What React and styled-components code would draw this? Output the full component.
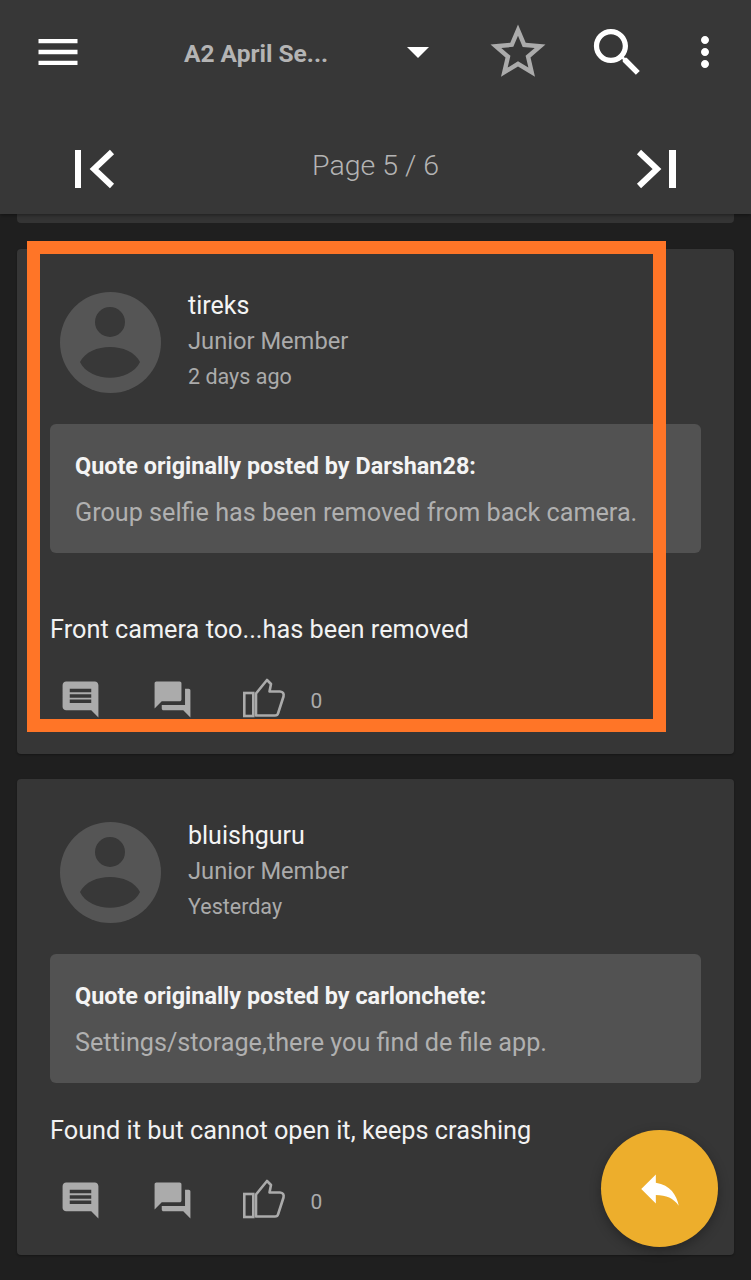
import styled, { createGlobalStyle } from "styled-components"

const GlobalStyle = createGlobalStyle`
    html, body {
        margin: 0;
        padding: 0;
        background: #1f1f1f;
        font-family: Roboto, "Liberation Sans", sans-serif;
    }
`

const Page = styled.div`
    position: relative;
    width: 751px;
    height: 1280px;
    overflow: hidden;
    background: #1f1f1f;
`

const Header = styled.header`
    position: relative;
    z-index: 2;
    height: 214px;
    background: #373737;
    box-shadow: 0 1px 4px rgba(0, 0, 0, 0.45);
`

const ToolRow = styled.div`
    display: flex;
    align-items: center;
    height: 104px;
    padding-left: 32px;
`

const Title = styled.span`
    width: 223px;
    margin-left: 100px;
    margin-top: 2px;
    font-size: 24.5px;
    font-weight: 700;
    color: #b4b4b4;
`

const Icon = styled.svg`
    display: block;
    flex: none;
    margin-left: ${(p) => p.$left || 0}px;
    margin-top: ${(p) => p.$top || 0}px;
    fill: ${(p) => p.$color || "#fff"};
`

const PagerRow = styled.div`
    display: flex;
    align-items: center;
    justify-content: space-between;
    box-sizing: border-box;
    height: 110px;
    padding: 20px 74px 0;
    font-size: 28.5px;
    font-weight: 300;
    color: #b4b4b4;
`

const PagerLabel = styled.span`
    margin-top: -8px;
`

const PrevTail = styled.div`
    height: 9px;
    margin: 0 17px 26px;
    background: #343434;
    border-radius: 0 0 4px 4px;
`

const Card = styled.article`
    margin: 0 17px 25px;
    padding: 39px 33px 33px;
    background: #363636;
    border-radius: 4px;
    box-shadow: 0 1px 2px rgba(0, 0, 0, 0.3);
`

const AuthorRow = styled.div`
    display: flex;
    align-items: flex-start;
    padding-left: 10px;
`

const Avatar = styled.svg`
    display: block;
    flex: none;
    margin-top: 4px;
`

const AuthorInfo = styled.div`
    display: flex;
    flex-direction: column;
    margin-left: 27px;
    font-size: 23.7px;
    line-height: 35px;
    color: #ababab;
`

const Name = styled.span`
    font-size: 25px;
    line-height: 36px;
    color: #f4f4f4;
`

const When = styled.span`
    font-size: 21.5px;
    line-height: 36px;
`

const Quote = styled.div`
    margin-top: 29px;
    padding: 24px 25px 22px;
    background: #525252;
    border-radius: 6px;
    font-size: 25.2px;
    line-height: 36px;
    color: #b0b0b0;
`

const QuoteHead = styled.div`
    margin-bottom: 11px;
    font-size: 23.4px;
    font-weight: 700;
    color: #f4f4f4;
`

const Body = styled.p`
    margin: ${(p) => p.$gap}px 0 0;
    font-size: 25.3px;
    line-height: 36px;
    color: #f2f2f2;
`

const Actions = styled.div`
    display: flex;
    align-items: center;
    height: 43px;
    margin-top: 30px;
    padding-left: 8.5px;
`

const Count = styled.span`
    margin-left: 25px;
    margin-top: 2px;
    font-size: 21px;
    color: #ababab;
`

const Highlight = styled.div`
    position: absolute;
    z-index: 1;
    left: 27px;
    top: 241px;
    width: 639px;
    height: 491px;
    box-sizing: border-box;
    border: 13px solid #ff7527;
`

const Fab = styled.button`
    position: absolute;
    z-index: 3;
    left: 601px;
    top: 1130px;
    display: flex;
    align-items: center;
    justify-content: center;
    width: 117px;
    height: 117px;
    padding: 0;
    border: none;
    border-radius: 50%;
    background: #edae2c;
    box-shadow: 0 4px 12px rgba(0, 0, 0, 0.3);
`

const MenuIcon = () => (
    <Icon width="52" height="52" viewBox="0 0 24 24">
        <path d="M3 18h18v-2H3v2zm0-5h18v-2H3v2zm0-7v2h18V6H3z" />
    </Icon>
)

const CaretIcon = () => (
    <Icon width="22" height="11" viewBox="0 0 22 11" $color="#fff">
        <path d="M0 0h22L11 11z" />
    </Icon>
)

const StarIcon = () => (
    <Icon width="66" height="66" viewBox="0 0 24 24" $left={56} $color="#ababab">
        <path d="M22 9.24l-7.19-.62L12 2 9.19 8.63 2 9.24l5.46 4.73L5.82 21 12 17.27 18.18 21l-1.63-7.03L22 9.24zM12 15.4l-3.76 2.27 1-4.28-3.32-2.88 4.38-.38L12 6.1l1.71 4.04 4.38.38-3.32 2.88 1 4.28L12 15.4z" />
    </Icon>
)

const SearchIcon = () => (
    <Icon width="63" height="63" viewBox="0 0 24 24" $left={35}>
        <path d="M15.5 14h-.79l-.28-.27C15.41 12.59 16 11.11 16 9.5 16 5.91 13.09 3 9.5 3S3 5.91 3 9.5 5.91 16 9.5 16c1.61 0 3.09-.59 4.23-1.57l.27.28v.79l5 4.99L20.49 19l-4.99-5zm-6 0C7.01 14 5 11.99 5 9.5S7.01 5 9.5 5 14 7.01 14 9.5 11.99 14 9.5 14z" />
    </Icon>
)

const MoreIcon = () => (
    <Icon width="48" height="48" viewBox="0 0 24 24" $left={32}>
        <path d="M12 8c1.1 0 2-.9 2-2s-.9-2-2-2-2 .9-2 2 .9 2 2 2zm0 2c-1.1 0-2 .9-2 2s.9 2 2 2 2-.9 2-2-.9-2-2-2zm0 6c-1.1 0-2 .9-2 2s.9 2 2 2 2-.9 2-2-.9-2-2-2z" />
    </Icon>
)

const FirstPageIcon = () => (
    <Icon width="41" height="40" viewBox="0 0 41 40">
        <rect x="1" y="1" width="6" height="38" />
        <path d="M38 3 L20 20 L38 37" fill="none" stroke="#fff" strokeWidth="6" />
    </Icon>
)

const LastPageIcon = () => (
    <Icon width="41" height="40" viewBox="0 0 41 40">
        <rect x="33" y="1" width="7" height="38" />
        <path d="M3 3 L21 20 L3 37" fill="none" stroke="#fff" strokeWidth="6" />
    </Icon>
)

const AvatarIcon = () => (
    <Avatar width="101" height="101" viewBox="0 0 101 101">
        <circle cx="50.5" cy="50.5" r="50.5" fill="#555555" />
        <circle cx="50" cy="30" r="15" fill="#383838" />
        <path d="M20 70 C30 50 70 50 80 70 C70 91 30 91 20 70z" fill="#383838" />
    </Avatar>
)

const CommentIcon = () => (
    <Icon width="43" height="43" viewBox="0 0 24 24" $color="#ababab">
        <path d="M21.99 4c0-1.1-.89-2-1.99-2H4c-1.1 0-2 .9-2 2v12c0 1.1.9 2 2 2h14l4 4-.01-18zM18 14H6v-2h12v2zm0-3H6V9h12v2zm0-3H6V6h12v2z" />
    </Icon>
)

const ForumIcon = () => (
    <Icon width="43" height="43" viewBox="0 0 24 24" $left={49} $color="#ababab">
        <path d="M21 6h-2v9H6v2c0 .55.45 1 1 1h11l4 4V7c0-.55-.45-1-1-1zm-4 6V3c0-.55-.45-1-1-1H3c-.55 0-1 .45-1 1v14l4-4h10c.55 0 1-.45 1-1z" />
    </Icon>
)

const ThumbIcon = () => (
    <Icon width="43" height="40" viewBox="0 0 43 40" $left={49} $top={-4} $color="none">
        <g fill="none" stroke="#ababab" strokeWidth="2.6">
            <rect x="1.3" y="15" width="9" height="23" />
            <path d="M13 37.5 V15.5 L24 2 L28 6 L26.5 13.5 H37 Q41.5 14 40.5 18.5 L35 35.5 Q34.5 37.5 32 37.5z" strokeLinejoin="round" />
        </g>
    </Icon>
)

const ReplyIcon = () => (
    <Icon width="50" height="50" viewBox="0 0 24 24">
        <path d="M10 9V5l-7 7 7 7v-4.1c5 0 8.5 1.6 11 5.1-1-5-4-10-11-11z" />
    </Icon>
)

const posts = [
    {
        name: "tireks",
        when: "2 days ago",
        quoted: "Darshan28",
        quote: "Group selfie has been removed from back camera.",
        text: "Front camera too...has been removed",
        gap: 59,
    },
    {
        name: "bluishguru",
        when: "Yesterday",
        quoted: "carlonchete",
        quote: "Settings/storage,there you find de file app.",
        text: "Found it but cannot open it, keeps crashing",
        gap: 30,
    },
]

const Post = ({ post }) => (
    <Card>
        <AuthorRow>
            <AvatarIcon />
            <AuthorInfo>
                <Name>{post.name}</Name>
                <span>Junior Member</span>
                <When>{post.when}</When>
            </AuthorInfo>
        </AuthorRow>
        <Quote>
            <QuoteHead>Quote originally posted by {post.quoted}:</QuoteHead>
            {post.quote}
        </Quote>
        <Body $gap={post.gap}>{post.text}</Body>
        <Actions>
            <CommentIcon />
            <ForumIcon />
            <ThumbIcon />
            <Count>0</Count>
        </Actions>
    </Card>
)

const App = () => (
    <Page>
        <GlobalStyle />
        <Header>
            <ToolRow>
                <MenuIcon />
                <Title>A2 April Se...</Title>
                <CaretIcon />
                <StarIcon />
                <SearchIcon />
                <MoreIcon />
            </ToolRow>
            <PagerRow>
                <FirstPageIcon />
                <PagerLabel>Page 5 / 6</PagerLabel>
                <LastPageIcon />
            </PagerRow>
        </Header>
        <PrevTail />
        {posts.map((post) => (
            <Post key={post.name} post={post} />
        ))}
        <Highlight />
        <Fab aria-label="Reply">
            <ReplyIcon />
        </Fab>
    </Page>
)

export default App
